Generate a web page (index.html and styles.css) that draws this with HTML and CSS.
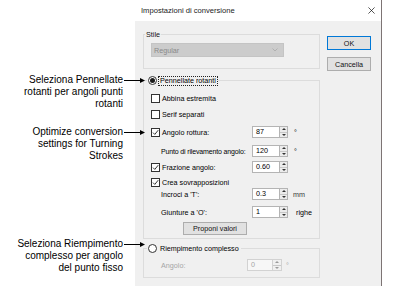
FILE: index.html
```html
<!DOCTYPE html>
<html>
<head>
<meta charset="utf-8">
<link rel="stylesheet" href="styles.css">
</head>
<body>
<div class="page">
  <div class="notes">
    <div class="note note-1">
      <p class="note-text">Seleziona Pennellate<br>rotanti per angoli punti<br>rotanti</p>
      <svg class="arrow" viewBox="0 0 23 12"><line x1="1" y1="6.5" x2="18" y2="6.5" stroke="#000" stroke-width="1"/><polygon points="17,4 22,6.5 17,9" fill="#000"/></svg>
    </div>
    <div class="note note-2">
      <p class="note-text">Optimize conversion<br>settings for Turning<br>Strokes</p>
      <svg class="arrow" viewBox="0 0 23 12"><line x1="1" y1="6.5" x2="18" y2="6.5" stroke="#000" stroke-width="1"/><polygon points="17,4 22,6.5 17,9" fill="#000"/></svg>
    </div>
    <div class="note note-3">
      <p class="note-text">Seleziona Riempimento<br>complesso per angolo<br>del punto fisso</p>
      <svg class="arrow" viewBox="0 0 23 12"><line x1="1" y1="6.5" x2="18" y2="6.5" stroke="#000" stroke-width="1"/><polygon points="17,4 22,6.5 17,9" fill="#000"/></svg>
    </div>
  </div>

  <div class="dialog">
    <div class="titlebar">
      <span class="title">Impostazioni di conversione</span>
      <svg class="close" viewBox="0 0 8 8"><path d="M0.5 0.5 L7.5 7.5 M7.5 0.5 L0.5 7.5" stroke="#111" stroke-width="0.8" fill="none"/></svg>
    </div>
    <div class="dlg-body">
      <div class="main-col">
        <fieldset class="grp grp-stile">
          <legend class="lg-text">Stile</legend>
          <div class="grp-inner inner-stile">
            <div class="combo"><span>Regular</span><svg class="chev" viewBox="0 0 6 4"><polyline points="0.5,0.5 3,3 5.5,0.5" fill="none" stroke="#a8a8a8" stroke-width="0.8"/></svg></div>
          </div>
        </fieldset>

        <fieldset class="grp grp-turn">
          <legend class="lg-radio"><span class="radio on"></span><span class="focus">Pennellate rotanti</span></legend>
          <div class="grp-inner inner-turn">
            <div class="row r-abbina"><span class="cb"></span><span class="cb-text">Abbina estremita</span></div>
            <div class="row r-serif"><span class="cb"></span><span class="cb-text">Serif separati</span></div>
            <div class="row r-angolo">
              <div class="lbl"><span class="cb"><svg viewBox="0 0 7 7"><polyline points="1,3.6 2.8,5.4 6.2,1.2" fill="none" stroke="#222" stroke-width="0.9"/></svg></span><span class="cb-text">Angolo rottura:</span></div>
              <div class="spin"><span class="spin-field">87</span><span class="spin-btns"><span class="up"></span><span class="dn"></span></span></div>
              <span class="unit">°</span>
            </div>
            <div class="row r-punto">
              <div class="lbl ind lbl-long">Punto di rilevamento angolo:</div>
              <div class="spin"><span class="spin-field">120</span><span class="spin-btns"><span class="up"></span><span class="dn"></span></span></div>
              <span class="unit">°</span>
            </div>
            <div class="row r-fraz">
              <div class="lbl"><span class="cb"><svg viewBox="0 0 7 7"><polyline points="1,3.6 2.8,5.4 6.2,1.2" fill="none" stroke="#222" stroke-width="0.9"/></svg></span><span class="cb-text">Frazione angolo:</span></div>
              <div class="spin"><span class="spin-field">0.60</span><span class="spin-btns"><span class="up"></span><span class="dn"></span></span></div>
            </div>
            <div class="row r-crea"><span class="cb"><svg viewBox="0 0 7 7"><polyline points="1,3.6 2.8,5.4 6.2,1.2" fill="none" stroke="#222" stroke-width="0.9"/></svg></span><span class="cb-text">Crea sovrapposizioni</span></div>
            <div class="row r-incroci">
              <div class="lbl ind">Incroci a 'T':</div>
              <div class="spin"><span class="spin-field">0.3</span><span class="spin-btns"><span class="up"></span><span class="dn"></span></span></div>
              <span class="unit unit-mm">mm</span>
            </div>
            <div class="row r-giunt">
              <div class="lbl ind">Giunture a 'O':</div>
              <div class="spin"><span class="spin-field">1</span><span class="spin-btns"><span class="up"></span><span class="dn"></span></span></div>
              <span class="unit unit-righe">righe</span>
            </div>
            <div class="btn btn-propose">Proponi valori</div>
          </div>
        </fieldset>

        <fieldset class="grp grp-fill">
          <legend class="lg-radio"><span class="radio"></span><span class="plain">Riempimento complesso</span></legend>
          <div class="grp-inner inner-fill">
            <div class="row r-fill disabled">
              <div class="lbl lbl-fill ind">Angolo:</div>
              <div class="spin spin-dis"><span class="spin-field">0</span><span class="spin-btns"><span class="up"></span><span class="dn"></span></span></div>
              <span class="unit">°</span>
            </div>
          </div>
        </fieldset>
      </div>
      <div class="btn-col">
        <div class="btn btn-default">OK</div>
        <div class="btn">Cancella</div>
      </div>
    </div>
  </div>
</div>
</body>
</html>
```

FILE: styles.css
```css
* { box-sizing: border-box; }
html, body { margin: 0; padding: 0; background: #fff; }
body { width: 398px; height: 303px; overflow: hidden; }

.page { display: flex; align-items: flex-start; }

/* callouts */
.notes {
  width: 135px;
  flex-shrink: 0;
  position: relative;
  z-index: 1;
  font-family: "Liberation Sans", Arial, sans-serif;
  font-size: 10px;
  line-height: 12px;
  color: #000;
}
.note { display: flex; align-items: flex-start; }
.note-text { margin: 0; width: 123px; flex-shrink: 0; text-align: right; }
.arrow { display: block; flex-shrink: 0; width: 23px; height: 12px; }
.note-1 { margin-top: 74px; }
.note-2 { margin-top: 16px; }
.note-3 { margin-top: 76px; }

/* dialog */
.dialog {
  width: 247px;
  height: 286px;
  flex-shrink: 0;
  border-right: 1px solid #7d7474;
  display: flex;
  flex-direction: column;
  font-family: "Liberation Sans", Arial, sans-serif;
  font-size: 7.2px;
  color: #000;
  white-space: nowrap;
}
.titlebar {
  height: 21px;
  background: #fff;
  display: flex;
  align-items: center;
  justify-content: space-between;
  padding: 0 6px 0 6px;
}
.title { font-size: 7.6px; color: #1a1a1a; }
.close { width: 7px; height: 7px; display: block; }

.dlg-body {
  flex: 1;
  background: #f0f0f0;
  display: flex;
  align-items: flex-start;
  padding-left: 8px;
}
.main-col { width: 177px; display: flex; flex-direction: column; }

.grp {
  margin: 0;
  padding: 0;
  border: 1px solid #dcdcdc;
  min-width: 0;
}
.grp legend {
  height: 9px;
  line-height: 9px;
  padding: 0 1px;
  display: flex;
  align-items: center;
}
.lg-text { margin-left: 1px; color: #111; }
.lg-radio { margin-left: 3px; }

.grp-stile { margin-top: 9px; }
.grp-turn { margin-top: 7px; }
.grp-fill { margin-top: 5px; }

.grp-inner { padding: 0 7px; }
.inner-stile { padding-top: 4px; padding-bottom: 11px; }
.inner-turn { padding-top: 7px; padding-bottom: 3px; }
.inner-fill { padding-top: 6px; padding-bottom: 6px; }

.combo {
  width: 133px;
  height: 14px;
  background: #cccccc;
  border: 1px solid #c4c4c4;
  color: #8a8a8a;
  display: flex;
  align-items: center;
  justify-content: space-between;
  padding: 0 5px 0 2px;
}
.chev { width: 6px; height: 4px; display: block; }

.radio {
  width: 9px;
  height: 9px;
  border: 1px solid #333;
  border-radius: 50%;
  background: #fff;
  display: flex;
  align-items: center;
  justify-content: center;
  margin-right: 2px;
  flex-shrink: 0;
}
.radio.on::after {
  content: "";
  width: 5px;
  height: 5px;
  border-radius: 50%;
  background: #1a1a1a;
}
.focus { outline: 1px dotted #222; outline-offset: 0; padding: 0 1px; line-height: 8px; }
.plain { padding: 0 1px; }

.row { display: flex; align-items: center; height: 12px; }
.r-abbina { margin-top: 0; }
.r-serif { margin-top: 4px; }
.r-angolo { margin-top: 6px; }
.r-punto { margin-top: 7px; }
.r-fraz { margin-top: 4px; }
.r-crea { margin-top: 3px; }
.r-incroci { margin-top: 0; }
.r-giunt { margin-top: 6px; }

.cb {
  width: 9px;
  height: 9px;
  border: 1px solid #333;
  background: #fff;
  flex-shrink: 0;
  display: flex;
  align-items: center;
  justify-content: center;
}
.cb svg { width: 7px; height: 7px; display: block; }
.cb-text { margin-left: 2px; }

.lbl { width: 101px; flex-shrink: 0; display: flex; align-items: center; overflow: visible; }
.lbl.ind { padding-left: 10px; }
.lbl-long { letter-spacing: -0.15px; padding-left: 10px; font-size: 7px; }
.lbl-fill { width: 96px; }

.spin { display: flex; height: 12px; flex-shrink: 0; }
.spin-field {
  width: 28px;
  height: 12px;
  background: #fff;
  border: 1px solid #b4b4b4;
  padding-left: 3px;
  line-height: 10px;
}
.spin-btns {
  width: 8px;
  height: 12px;
  border: 1px solid #b4b4b4;
  border-left: none;
  background: #ececec;
  display: flex;
  flex-direction: column;
}
.spin-btns .up, .spin-btns .dn {
  flex: 1;
  display: flex;
  align-items: center;
  justify-content: center;
}
.spin-btns .up { border-bottom: 1px solid #c8c8c8; }
.spin-btns .up::after {
  content: "";
  border-left: 2px solid transparent;
  border-right: 2px solid transparent;
  border-bottom: 2px solid #333;
}
.spin-btns .dn::after {
  content: "";
  border-left: 2px solid transparent;
  border-right: 2px solid transparent;
  border-top: 2px solid #333;
}
.unit { margin-left: 6px; }
.unit-mm { margin-left: 5px; color: #3a3a3a; }
.unit-righe { margin-left: 8px; }

.disabled { color: #a6a6a6; }
.spin-dis .spin-field { width: 26px; background: #f7f7f7; border-color: #d2d2d2; color: #a6a6a6; }
.spin-dis .spin-btns { width: 9px; border-color: #d2d2d2; background: #f0f0f0; }
.spin-dis .up::after { border-bottom-color: #9a9a9a; }
.spin-dis .dn::after { border-top-color: #9a9a9a; }
.r-fill .unit { margin-left: 4px; }

.btn {
  height: 14px;
  background: #e1e1e1;
  border: 1px solid #adadad;
  display: flex;
  align-items: center;
  justify-content: center;
  color: #111;
}
.btn-propose { width: 64px; margin-top: 4px; margin-left: 32px; height: 13px; }

.btn-col {
  width: 44px;
  margin-left: 7px;
  padding-top: 15px;
  display: flex;
  flex-direction: column;
  gap: 7px;
}
.btn-default { border-color: #0078d7; }
```
